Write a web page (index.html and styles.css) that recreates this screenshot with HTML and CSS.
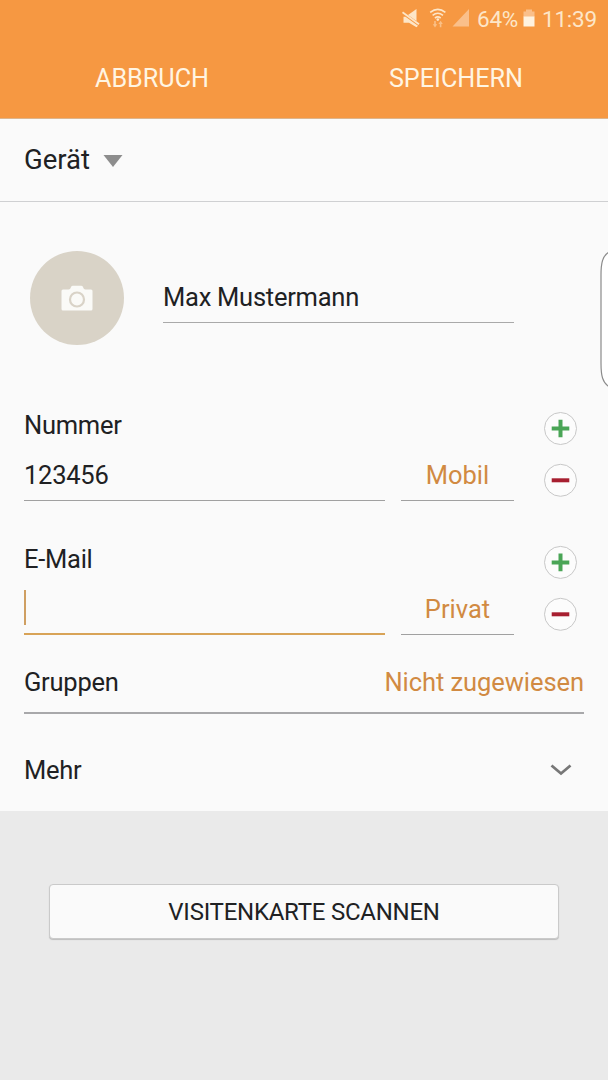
FILE: index.html
```html
<!DOCTYPE html>
<html lang="de">
<head>
<meta charset="utf-8">
<title>Kontakt erstellen</title>
<link rel="stylesheet" href="styles.css">
</head>
<body>
<div class="screen">
  <header class="header">
    <div class="status">
      <svg class="status-icons" width="82" height="24" viewBox="0 0 82 24">
        <g fill="#fde6c8">
          <path d="M8 8L16.500 2v12z"/>
          <path d="M3.500 9.800h2L18 18.800 16.500 20.200 9 15.800H3.500z"/>
        </g>
        <path d="M2.500 5.200L19 17.200" stroke="#fde6c8" stroke-width="1.800"/>
        <g fill="none" stroke="#fde6c8" stroke-width="1.600">
          <path d="M30.200 5.400Q37.800 -.6 45.400 5.400"/>
          <path d="M32.600 8.300Q37.800 4.300 43 8.300"/>
          <path d="M34.900 11.100Q37.800 8.700 40.700 11.100"/>
        </g>
        <circle cx="37.800" cy="12.600" r="1.300" fill="#fde6c8"/>
        <path d="M32.800 17.200h1.400v-3.200h1.600v3.200h1.400l-2.200 3.200zM38.400 17l2.200-3.200 2.200 3.200h-1.400v3.200h-1.600V17z" fill="#fac087"/>
        <path d="M52.500 19.500L69 2v17.500z" fill="#fabf8a"/>
      </svg>
      <span class="battery-text">64%</span>
      <svg class="battery" width="12" height="20" viewBox="0 0 12 20">
        <path d="M3 1.500h6v2h2.500V9H.5V3.500H3z" fill="#fabf8a"/>
        <path d="M.5 8.500h11v10H.5z" fill="#fff2df"/>
      </svg>
      <span class="clock">11:39</span>
    </div>
    <nav class="actions">
      <span class="action cancel">ABBRUCH</span>
      <span class="action save">SPEICHERN</span>
    </nav>
  </header>

  <div class="account">
    <span class="account-name">Gerät</span>
    <svg class="arrow" width="20" height="12" viewBox="0 0 20 12"><path d="M.5 0h19L10 12z" fill="#8d8d8d"/></svg>
  </div>

  <main class="form">
    <div class="person">
      <div class="avatar">
        <svg width="32" height="26" viewBox="0 0 32 26">
          <path d="M2 4.500h5.500c1.500 0 2-1.200 2.500-2.500q.5-1.300 2-1.300h8q1.500 0 2 1.300c.5 1.300 1 2.500 2.500 2.500H30q1.500 0 1.500 1.500v18q0 1.500-1.500 1.500H2Q.5 25.500.5 24V6Q.5 4.500 2 4.500z" fill="#fafaf7"/>
          <circle cx="16" cy="14.500" r="7" fill="none" stroke="#d9d3c7" stroke-width="2.200"/>
        </svg>
      </div>
      <div class="name">Max Mustermann</div>
    </div>

    <section class="group">
      <div class="fields">
        <div class="label">Nummer</div>
        <div class="row">
          <div class="input"><span class="digits">123456</span></div>
          <div class="type">Mobil</div>
        </div>
      </div>
      <div class="buttons">
        <svg class="round" width="34" height="34" viewBox="0 0 34 34"><circle class="ring" cx="17.500" cy="17.500" r="16"/><path class="plus" d="M8.700 17.500h17.600M17.500 8.700v17.600"/></svg>
        <svg class="round" width="34" height="34" viewBox="0 0 34 34"><circle class="ring" cx="17.500" cy="17.300" r="16"/><path class="minus" d="M8.700 17.300h17.600"/></svg>
      </div>
    </section>

    <section class="group">
      <div class="fields">
        <div class="label">E-Mail</div>
        <div class="row">
          <div class="input focused"><span class="caret"></span></div>
          <div class="type">Privat</div>
        </div>
      </div>
      <div class="buttons">
        <svg class="round" width="34" height="34" viewBox="0 0 34 34"><circle class="ring" cx="17.500" cy="17.400" r="16"/><path class="plus" d="M8.700 17.400h17.600M17.500 8.600v17.600"/></svg>
        <svg class="round" width="34" height="34" viewBox="0 0 34 34"><circle class="ring" cx="17.500" cy="17.300" r="16"/><path class="minus" d="M8.700 17.300h17.600"/></svg>
      </div>
    </section>

    <div class="groups">
      <span class="groups-label">Gruppen</span>
      <span class="groups-value">Nicht zugewiesen</span>
    </div>

    <div class="more">
      <span class="more-label">Mehr</span>
      <svg width="22" height="14" viewBox="0 0 22 14"><path d="M1.500 2.500L11 10.500l9.500-8" fill="none" stroke="#777" stroke-width="2.800"/></svg>
    </div>
  </main>

  <footer class="footer">
    <div class="scan">VISITENKARTE SCANNEN</div>
  </footer>
  <svg class="edge-handle" width="9" height="138" viewBox="0 0 9 138"><path d="M9.500 1.500C3.500 5 2 12 2 24v88c0 13 1.500 19 7.500 23.500" fill="#fff" stroke="#8b8b8b" stroke-width="1.200"/></svg>
</div>
</body>
</html>
```
FILE: styles.css
```css
* { box-sizing: border-box; }
body { margin: 0; }
svg { display: block; flex: none; }

.screen {
  position: relative;
  display: flex;
  flex-direction: column;
  width: 608px;
  height: 1080px;
  overflow: hidden;
  background: #fafafa;
  color: #202123;
  font-family: Roboto, "Noto Sans", sans-serif;
  font-size: 25.5px;
  letter-spacing: -0.25px;
  white-space: nowrap;
}

.header {
  height: 119px;
  background: #f69842;
  border-bottom: 1px solid #ddb58d;
}
.status {
  display: flex;
  align-items: center;
  height: 38px;
  padding-left: 400px;
  font-size: 22.5px;
  color: #fde6c8;
}
.status-icons { margin-right: -5px; }
.battery { margin: -2px 7px 0 5px; }
.actions {
  display: grid;
  grid-template-columns: 304px 304px;
  height: 80px;
  line-height: 81px;
  font-size: 25.2px;
  letter-spacing: 0;
  text-align: center;
  color: #fff5e3;
}

.account {
  display: flex;
  align-items: center;
  gap: 13px;
  height: 83px;
  padding: 0 0 2px 24px;
  border-bottom: 1px solid #cfd0d2;
  font-size: 27.5px;
  letter-spacing: 0;
}
.arrow { margin-top: 3px; }

.form { height: 609px; padding: 49px 24px 0; }
.person { display: flex; height: 155px; padding-left: 6px; }
.avatar {
  display: flex;
  align-items: center;
  justify-content: center;
  width: 94px;
  height: 94px;
  border-radius: 50%;
  background: #d9d3c7;
}
.name {
  width: 351px;
  height: 50px;
  margin: 22px 0 0 39px;
  border-bottom: 1px solid #a9a9a9;
  line-height: 49px;
}

.group { display: flex; justify-content: space-between; height: 134px; }
.fields { width: 490px; }
.label { height: 44px; line-height: 39px; }
.row { display: flex; gap: 16px; line-height: 51px; }
.input { display: flex; align-items: center; width: 361px; height: 51px; border-bottom: 1px solid #a0a0a0; }
.type { width: 113px; height: 51px; border-bottom: 1px solid #a0a0a0; text-align: center; color: #d18a42; letter-spacing: 0; }
.focused { border-bottom: 2px solid #d8a357; }
.caret { width: 2px; height: 35px; margin-bottom: 2px; background: #cf9f62; }
.buttons { display: flex; flex-direction: column; gap: 18px; width: 41px; padding-top: 5px; }
.round { overflow: visible; }
.ring { fill: #fcfcfc; stroke: #c8c8c8; stroke-width: 1; }
.plus { stroke: #4aa556; stroke-width: 4; }
.minus { stroke: #a71f30; stroke-width: 4; }

.groups {
  display: flex;
  justify-content: space-between;
  height: 53px;
  margin-top: -13px;
  border-bottom: 2px solid #a8a8aa;
  line-height: 42px;
}
.groups-value { color: #d18a42; letter-spacing: -0.07px; }
.more {
  display: flex;
  align-items: center;
  justify-content: space-between;
  height: 97px;
  padding: 15px 12px 0 0;
}

.footer {
  display: flex;
  justify-content: center;
  align-items: flex-start;
  height: 269px;
  padding-top: 73px;
  background: #eaeaea;
}
.scan {
  width: 510px;
  height: 55px;
  border: 1px solid #cacaca;
  border-radius: 4px;
  background: #fafafa;
  box-shadow: 0 1px 1px #bdbdbd;
  line-height: 55px;
  text-align: center;
  font-size: 24px;
}
.edge-handle { position: absolute; top: 251px; right: 0; }
```
